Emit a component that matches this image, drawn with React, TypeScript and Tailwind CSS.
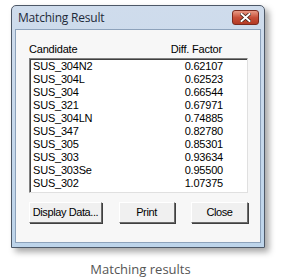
const rows: [string, string][] = [
  ["SUS_304N2", "0.62107"],
  ["SUS_304L", "0.62523"],
  ["SUS_304", "0.66544"],
  ["SUS_321", "0.67971"],
  ["SUS_304LN", "0.74885"],
  ["SUS_347", "0.82780"],
  ["SUS_305", "0.85301"],
  ["SUS_303", "0.93634"],
  ["SUS_303Se", "0.95500"],
  ["SUS_302", "1.07375"],
];

function WinButton({ label, w }: { label: string; w: string }) {
  return (
    <div
      className={`${w} h-[21px] flex items-center justify-center whitespace-nowrap tracking-[-0.4px] bg-[#f0f0f0] border border-t-white border-l-white border-r-[#6b6b6b] border-b-[#6b6b6b] shadow-[1px_1px_0_#404040] text-[11px] text-black`}
    >
      {label}
    </div>
  );
}

export default function App() {
  return (
    <div className="w-[281px] h-[280px] bg-white overflow-hidden relative font-['Liberation_Sans',Arial,sans-serif]">
      <div className="ml-[11px] mt-[5px] w-[254px] h-[243px] border border-[#4d5867] rounded-t-[5px] bg-gradient-to-b from-[#cfdcec] to-[#bdd4ea] shadow-[4px_4px_6px_rgba(0,0,0,0.35)] flex flex-col px-[3px] pb-[4px]">
        <div className="h-[23px] flex items-center justify-between pl-[3px] pr-[2px]">
          <span className="text-[12px] text-[#1e2a3a] font-['Open_Sans',sans-serif] tracking-[-0.2px]">
            Matching Result
          </span>
          <div className="w-[27px] h-[15px] rounded-[3px] border border-[#7a2a1f] bg-gradient-to-b from-[#e89a86] via-[#c8503a] to-[#b33a24] flex items-center justify-center">
            <svg width="11" height="9" viewBox="0 0 11 9">
              <path d="M1.5 1 L9.5 8 M9.5 1 L1.5 8" stroke="#3a1a10" strokeWidth="3.4" strokeLinecap="square" />
              <path d="M1.5 1 L9.5 8 M9.5 1 L1.5 8" stroke="#ffffff" strokeWidth="2" strokeLinecap="square" />
            </svg>
          </div>
        </div>
        <div className="flex-1 bg-[#f7f7f7] border border-[#8da2bb] flex flex-col pl-[13px] pr-[12px] pt-[12px] tracking-[-0.2px]">
          <div className="flex justify-between text-[11px] text-black h-[14px] leading-[14px] pr-[26px]">
            <span>Candidate</span>
            <span>Diff. Factor</span>
          </div>
          <div className="mt-[2px] h-[135px] bg-white border border-t-[#808080] border-l-[#808080] border-r-[#e0e0e0] border-b-[#e0e0e0] shadow-[inset_1px_1px_0_#404040] pl-[3px] pr-[24px] pt-[1px]">
            {rows.map(([n, v]) => (
              <div key={n} className="flex justify-between h-[13px] leading-[13px] text-[11px] text-black">
                <span>{n}</span>
                <span>{v}</span>
              </div>
            ))}
          </div>
          <div className="mt-[9px] flex justify-between">
            <WinButton label="Display Data..." w="w-[73px]" />
            <WinButton label="Print" w="w-[56px]" />
            <WinButton label="Close" w="w-[57px]" />
          </div>
        </div>
      </div>
      <div className="mt-[12px] text-center text-[13px] text-[#555] font-['Open_Sans',sans-serif]">
        Matching results
      </div>
    </div>
  );
}
